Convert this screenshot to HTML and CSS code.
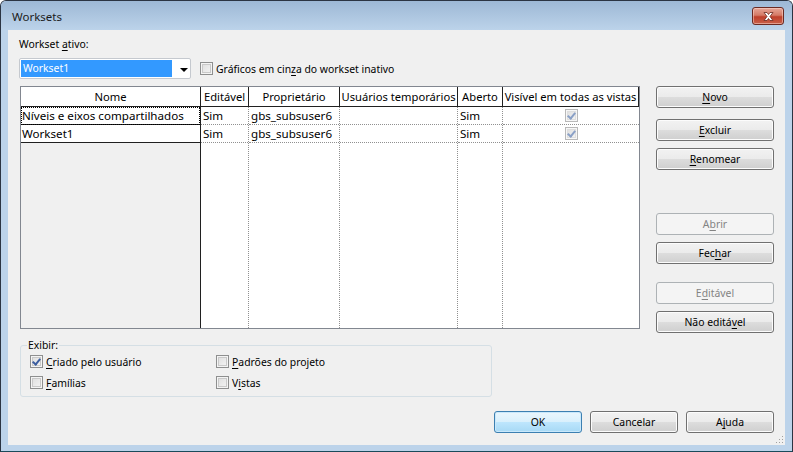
FILE: index.html
```html
<!DOCTYPE html>
<html lang="pt">
<head>
<meta charset="utf-8">
<title>Worksets</title>
<link rel="stylesheet" href="styles.css">
</head>
<body>
<div class="window">
  <div class="titlebar">
    <span class="title">Worksets</span>
    <button class="close" aria-label="Fechar">
      <svg width="17" height="11" viewBox="0 0 17 11"><path d="M4 1.5h3l1.5 2 1.5-2h3l-3 4 3 4h-3l-1.5-2-1.5 2h-3l3-4z" fill="#fff" stroke="#6a2a20" stroke-width="0.8" stroke-linejoin="round"/></svg>
    </button>
  </div>
  <div class="client">
    <div class="active-label">Workset <u>a</u>tivo:</div>
    <div class="top-row">
      <div class="combo">
        <span class="combo-sel">Workset1</span>
        <span class="combo-arrow"></span>
      </div>
      <label class="chk"><span class="box"></span><span>Gráficos em cin<u>z</u>a do workset inativo</span></label>
    </div>
    <div class="main">
      <div class="grid">
        <div class="col col-name">
          <div class="hd">Nome</div>
          <div class="cell focus">Níveis e eixos compartilhados</div>
          <div class="cell">Workset1</div>
          <div class="fill"></div>
        </div>
        <div class="col w-ed">
          <div class="hd">Editável</div>
          <div class="cell">Sim</div>
          <div class="cell">Sim</div>
          <div class="fill"></div>
        </div>
        <div class="col w-pr">
          <div class="hd">Proprietário</div>
          <div class="cell">gbs_subsuser6</div>
          <div class="cell">gbs_subsuser6</div>
          <div class="fill"></div>
        </div>
        <div class="col w-us">
          <div class="hd">Usuários temporários</div>
          <div class="cell"></div>
          <div class="cell"></div>
          <div class="fill"></div>
        </div>
        <div class="col w-ab">
          <div class="hd">Aberto</div>
          <div class="cell">Sim</div>
          <div class="cell">Sim</div>
          <div class="fill"></div>
        </div>
        <div class="col w-vi last">
          <div class="hd">Visível em todas as vistas</div>
          <div class="cell center"><span class="box checked dim"></span></div>
          <div class="cell center"><span class="box checked dim"></span></div>
          <div class="fill"></div>
        </div>
      </div>
      <div class="side">
        <button class="btn b-novo"><u>N</u>ovo</button>
        <button class="btn b-excl"><u>E</u>xcluir</button>
        <button class="btn b-ren"><u>R</u>enomear</button>
        <button class="btn b-abr" disabled>A<u>b</u>rir</button>
        <button class="btn b-fec">Fec<u>h</u>ar</button>
        <button class="btn b-edi" disabled>E<u>d</u>itável</button>
        <button class="btn b-nao">Não editá<u>v</u>el</button>
      </div>
    </div>
    <div class="group">
      <span class="legend">Exibir:</span>
      <div class="group-grid">
        <label class="chk"><span class="box checked"></span><span><u>C</u>riado pelo usuário</span></label>
        <label class="chk"><span class="box"></span><span><u>P</u>adrões do projeto</span></label>
        <label class="chk"><span class="box"></span><span><u>F</u>amílias</span></label>
        <label class="chk"><span class="box"></span><span>V<u>i</u>stas</span></label>
      </div>
    </div>
    <div class="footer">
      <button class="btn default">OK</button>
      <button class="btn">Cancelar</button>
      <button class="btn">A<u>j</u>uda</button>
    </div>
    <div class="grip"></div>
  </div>
</div>
</body>
</html>
```

FILE: styles.css
```css
* { box-sizing: border-box; }
html, body { margin: 0; padding: 0; background: #fff; }
body {
  font-family: "Noto Sans", "Open Sans", sans-serif;
  font-size: 10.4px;
  color: #000;
}
u { text-decoration: underline; text-underline-offset: 2px; }

.window {
  width: 793px;
  height: 452px;
  border: 1px solid #2b3442;
  border-bottom-color: #1a4a5a;
  border-radius: 6px 6px 0 0;
  background: #bcd3ea;
  padding: 0 7px 6px 7px;
  display: flex;
  flex-direction: column;
  overflow: hidden;
}
.titlebar {
  height: 29px;
  margin: 0 -7px;
  padding: 0 8px 0 11px;
  background: linear-gradient(#9db8d5, #bcd3ea);
  display: flex;
  align-items: center;
  justify-content: space-between;
  flex: none;
}
.title { font-size: 11.5px; color: #1b1b1b; padding-top: 2px; }
.close {
  width: 32px;
  height: 18px;
  margin-top: 1px;
  border: 1px solid #6b2a22;
  border-radius: 3px;
  background: linear-gradient(#e6a697 0%, #d57a66 45%, #bf3f2a 55%, #c8604a 100%);
  box-shadow: inset 0 0 0 1px rgba(255,220,210,.5);
  padding: 0;
  display: flex;
  align-items: center;
  justify-content: center;
}
.client {
  flex: 1;
  background: #f0f0f0;
  position: relative;
  padding: 7px 11px 0 11px;
  display: flex;
  flex-direction: column;
}
.active-label { height: 15px; line-height: 15px; }
.top-row {
  margin-top: 6px;
  display: flex;
  align-items: center;
  gap: 9px;
  height: 21px;
}
.combo {
  width: 172px;
  height: 21px;
  border: 1px solid #c5c9cf;
  border-radius: 2px;
  background: #fff;
  padding: 1px;
  display: flex;
  align-items: center;
}
.combo-sel {
  width: 151px;
  height: 17px;
  background: #3399ff;
  color: #fff;
  padding-left: 2px;
  line-height: 17px;
}
.combo-arrow {
  margin-left: 8px;
  width: 0; height: 0;
  border-left: 4px solid transparent;
  border-right: 4px solid transparent;
  border-top: 4px solid #000;
  margin-top: 2px;
}
.chk { display: flex; align-items: center; gap: 3px; white-space: nowrap; }
.box {
  width: 13px;
  height: 13px;
  border: 1px solid #8e8f8f;
  background: linear-gradient(135deg, #dcdcdc, #f6f6f6);
  box-shadow: inset 0 0 0 1px #f4f4f4, inset 0 0 0 2px #c9c9c9;
  display: inline-block;
  flex: none;
  position: relative;
}
.box.checked::after {
  content: "";
  position: absolute;
  left: 3px; top: 1px;
  width: 3px; height: 6px;
  border: solid #3c5ea0;
  border-width: 0 2px 2px 0;
  transform: rotate(40deg);
}
.box.dim { border-color: #b9b9b9; box-shadow: inset 0 0 0 1px #f7f7f7, inset 0 0 0 2px #dedede; }
.box.dim::after { border-color: #8aa0c6; }

.main {
  margin: 7px 0 0 1px;
  display: flex;
  gap: 16px;
  height: 243px;
  flex: none;
}
.grid {
  width: 620px;
  height: 243px;
  border: 1px solid #828790;
  background: #fff;
  display: flex;
  font-size: 11.6px;
}
.col {
  display: flex;
  flex-direction: column;
  border-right: 1px dotted #909090;
}
.col.last { border-right: none; }
.hd {
  height: 20px;
  line-height: 19px;
  font-size: 11.2px;
  text-align: center;
  background: #fff;
  border-bottom: 1px solid #202020;
  border-right: 1px solid #202020;
  margin-right: -1px;
  white-space: nowrap;
}
.col.last .hd { margin-right: 0; }
.cell {
  height: 18px;
  line-height: 17px;
  padding-left: 2px;
  border-bottom: 1px dotted #909090;
  white-space: nowrap;
}
.cell.center { display: flex; align-items: center; justify-content: center; padding: 0; }
.fill { flex: 1; }
.col-name { width: 180px; background: #f0f0f0; border-right: 1px solid #202020; }
.col-name .cell { background: #fff; border-bottom: 1px solid #202020; padding-left: 1px; }
.col-name .cell.focus { outline: 1px dotted #000; outline-offset: -1px; }
.w-ed { width: 48px; }
.w-pr { width: 91px; }
.w-us { width: 118px; }
.w-ab { width: 45px; }
.w-vi { width: 136px; }

.side {
  width: 118px;
  display: flex;
  flex-direction: column;
}
.btn {
  font: inherit;
  color: #000;
  height: 22px;
  flex: none;
  border: 1px solid #707070;
  border-radius: 3px;
  background: linear-gradient(#f2f2f2 0%, #ebebeb 49%, #dddddd 50%, #cfcfcf 100%);
  box-shadow: inset 0 0 0 1px #fcfcfc;
  padding: 0;
  width: 118px;
}
.btn[disabled] {
  border-color: #adb2b5;
  background: #f4f4f4;
  color: #838383;
  box-shadow: none;
}
.b-excl { margin-top: 11px; }
.b-ren { margin-top: 7px; }
.b-abr { margin-top: 43px; }
.b-fec { margin-top: 7px; }
.b-edi { margin-top: 18px; }
.b-nao { margin-top: 7px; }

.group {
  margin: 16px 0 0 1px;
  width: 472px;
  height: 52px;
  flex: none;
  border: 1px solid #d5dfe5;
  border-radius: 3px;
  padding: 0 8px 0 9px;
}
.legend {
  display: block;
  width: fit-content;
  height: 14px;
  line-height: 14px;
  margin: -8px 0 0 -3px;
  padding: 0 1px;
  background: #f0f0f0;
}
.group-grid {
  display: grid;
  grid-template-columns: 186px 1fr;
  row-gap: 6px;
  margin-top: 2px;
}
.group-grid .chk { height: 15px; }

.footer {
  margin-top: 14px;
  display: flex;
  justify-content: flex-end;
  gap: 8px;
}
.footer .btn { width: 88px; }
.btn.default {
  border-color: #3c7fb1;
  background: linear-gradient(#eaf6fd 0%, #d9f0fc 49%, #bee6fd 50%, #a7d9f5 100%);
  box-shadow: inset 0 0 0 1px #c9e8fb;
}
.grip {
  position: absolute;
  right: 2px;
  bottom: 2px;
  width: 8px;
  height: 8px;
  background:
    radial-gradient(circle, #a0a0a0 0.8px, transparent 1px) 0 0 / 3px 3px;
  clip-path: polygon(100% 0, 100% 100%, 0 100%);
}
```
